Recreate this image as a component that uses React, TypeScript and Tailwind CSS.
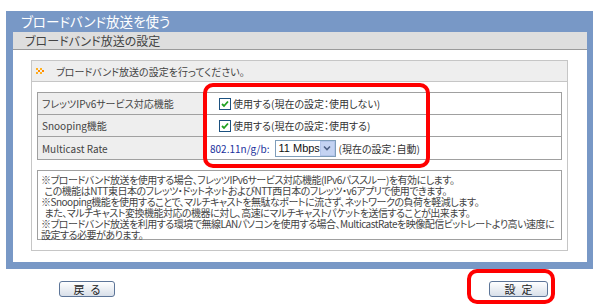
import React from "react";

const font = "font-['MS_UI_Gothic','Noto_Sans_CJK_JP',sans-serif] [font-feature-settings:'palt']";

function Chevrons() {
  return (
    <svg width="10" height="8" viewBox="0 0 10 8" className="shrink-0">
      {[
        [0, 0], [2, 2], [0, 4], [4, 0], [6, 2], [4, 4],
      ].map(([x, y], i) => (
        <rect key={i} x={x} y={y + 1} width="2" height="2" fill={i % 3 === 1 ? "#ff8a00" : "#ffb020"} />
      ))}
    </svg>
  );
}

function Check() {
  return (
    <span className="w-[12px] h-[12px] border border-[#1c5180] bg-white flex items-center justify-center shrink-0">
      <svg width="8" height="8" viewBox="0 0 8 8">
        <path d="M1 4 L3 6 L7 1.5" stroke="#21a121" strokeWidth="1.8" fill="none" />
      </svg>
    </span>
  );
}

function Btn({ label, w }: { label: string; w: string }) {
  return (
    <div
      className={`${w} h-[16px] border border-[#5d7598] rounded-[3px] bg-gradient-to-b from-[#ffffff] to-[#d8dfe9] flex items-center justify-center text-[11px] text-[#222] tracking-[6px] pl-[6px]`}
    >
      {label}
    </div>
  );
}

export default function App() {
  const notes = [
    "※ブロードバンド放送を使用する場合、フレッツIPv6サービス対応機能(IPv6パススルー)を有効にします。",
    "\u00a0\u00a0この機能はNTT東日本のフレッツ・ドットネットおよびNTT西日本のフレッツ・v6アプリで使用できます。",
    "※Snooping機能を使用することで、マルチキャストを無駄なポートに流さず、ネットワークの負荷を軽減します。",
    "\u00a0\u00a0また、マルチキャスト変換機能対応の機器に対し、高速にマルチキャストパケットを送信することが出来ます。",
    "※ブロードバンド放送を利用する環境で無線LANパソコンを使用する場合、MulticastRateを映像配信ビットレートより高い速度に",
    "設定する必要があります。",
  ];

  return (
    <div className={`w-[600px] h-[307px] bg-white relative overflow-hidden pt-[11px] pl-[6px] ${font}`}>
      <div className="w-[587px] bg-[#7898c6] pl-[7px] pr-[6px] pb-[7px]">
        <div className="h-[21px] text-white text-[13.5px] leading-[21px] pl-[8px]">ブロードバンド放送を使う</div>
        <div className="h-[18px] bg-[#dedede] border-b border-[#9a9a9a] text-[12px] leading-[17px] pl-[12px] text-[#444]">
          ブロードバンド放送の設定
        </div>
        <div className="bg-white pt-[10px] pb-[11px] pl-[18px] pr-[19px]">
          <div className="h-[191px] border border-[#c6c6c6]">
            <div className="h-[21px] bg-[#eeeeee] border-b border-[#c6c6c6] flex items-center gap-[10px] pl-[4px] text-[10px] text-[#444]">
              <Chevrons />
              <span>ブロードバンド放送の設定を行ってください。</span>
            </div>
            <div className="px-[5px] pt-[10px]">
              <div className="border border-[#a0a0a0] text-[10px] text-[#444]">
                {[
                  ["フレッツIPv6サービス対応機能", "check", "使用する(現在の設定：使用しない)"],
                  ["Snooping機能", "check", "使用する(現在の設定：使用する)"],
                  ["Multicast Rate", "select", ""],
                ].map(([label, kind, text], i) => (
                  <div key={i} className={`flex h-[22px] ${i < 2 ? "border-b border-[#a0a0a0]" : ""}`}>
                    <div className="w-[167px] bg-[#eeeeee] border-r border-[#a0a0a0] pl-[4px] flex items-center">
                      {label}
                    </div>
                    <div className="flex-1 flex items-center pl-[4px] gap-[2px] whitespace-nowrap">
                      {kind === "check" ? (
                        <>
                          <span className="ml-[10px]"><Check /></span>
                          <span className="text-[#333]">{text}</span>
                        </>
                      ) : (
                        <>
                          <span className="text-[#1a2f9c] pl-[1px]">802.11n/g/b:</span>
                          <div className="ml-[3px] w-[61px] h-[17px] border border-[#7f9db9] flex items-center bg-white">
                            <span className="flex-1 pl-[3px] text-[11px] text-[#111] whitespace-nowrap font-['Liberation_Sans',sans-serif]">11 Mbps</span>
                            <span className="w-[15px] h-[15px] bg-[#c4d3f2] border border-[#b3c5ea] flex items-center justify-center">
                              <svg width="8" height="6" viewBox="0 0 8 6">
                                <path d="M1 1.5 L4 4.5 L7 1.5" stroke="#4d6185" strokeWidth="1.6" fill="none" />
                              </svg>
                            </span>
                          </div>
                          <span className="ml-[1px] text-[#333]">(現在の設定：自動)</span>
                        </>
                      )}
                    </div>
                  </div>
                ))}
              </div>
              <div className="mt-[10px] h-[70px] border border-[#a0a0a0] px-[3px] pt-[3px] text-[10px] leading-[11px] tracking-[-0.5px] text-[#444]">
                {notes.map((n, i) => (
                  <div key={i} className="whitespace-nowrap">{n}</div>
                ))}
              </div>
            </div>
          </div>
        </div>
      </div>

      <div className="flex justify-between pl-[53px] pr-[52px] mt-[12px]">
        <Btn label="戻る" w="w-[56px]" />
        <Btn label="設定" w="w-[59px]" />
      </div>

      <div className="absolute left-[203px] top-[83px] w-[227px] h-[85px] border-[4px] border-[#ff0000] rounded-[10px]" />
      <div className="absolute left-[467px] top-[269px] w-[88px] h-[35px] border-[4px] border-[#ff0000] rounded-[10px]" />
    </div>
  );
}
